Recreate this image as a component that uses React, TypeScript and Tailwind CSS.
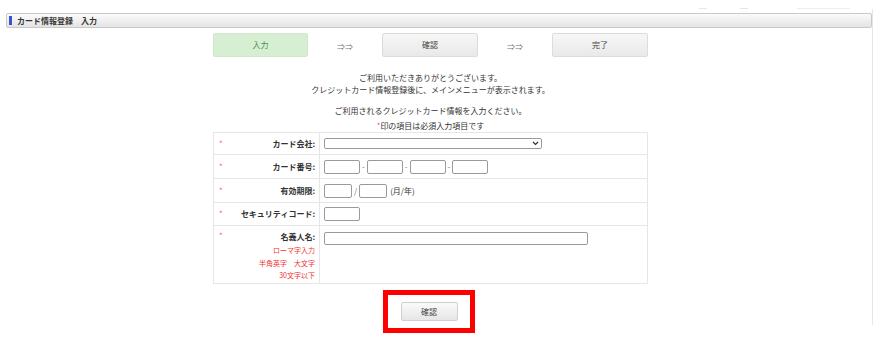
import React from 'react';

const font = { fontFamily: '"Noto Sans CJK JP", "Noto Sans", sans-serif' };

const Req = () => <span className="text-[#f06060] text-[8px] leading-none">*</span>;

const Box = ({ w }: { w: string }) => (
  <div className={`${w} h-[14px] rounded-[2px] border border-[#9a9a9a] bg-white`} />
);

const Step = ({ label, active }: { label: string; active?: boolean }) => (
  <div
    className={
      active
        ? 'w-[95px] h-[24px] rounded-[2px] border border-[#d2e8cc] bg-[#d6eed1] flex items-center justify-center text-[8px] text-[#4f8f4f]'
        : 'w-[96px] h-[24px] rounded-[2px] border border-[#dcdcdc] bg-gradient-to-b from-[#f7f7f7] to-[#e9e9e9] flex items-center justify-center text-[8px] text-[#444]'
    }
  >
    {label}
  </div>
);

const Arrow = () => (
  <div className="w-[74px] flex justify-center text-[8px] text-[#777] leading-none pt-[4px]">⇒⇒</div>
);

export default function App() {
  return (
    <div className="w-[885px] h-[346px] bg-white text-[#333] relative overflow-hidden" style={font}>
      {/* faint bits at very top */}
      <div className="absolute top-[8px] left-[699px] w-[8px] h-px bg-[#e6e6e6]" />
      <div className="absolute top-[8px] left-[740px] w-[8px] h-px bg-[#e6e6e6]" />
      <div className="absolute top-[8px] left-[797px] w-[53px] h-px bg-[#eeeeee]" />

      <div className="w-[873px] mt-[9px] pt-[4px] h-[316px] border-r border-[#e6e6e6]">
        {/* title bar */}
        <div className="ml-[6px] w-[866px] h-[15px] rounded-[2px] border border-[#c9c9c9] bg-gradient-to-b from-[#fbfbfb] to-[#e4e4e4] flex items-center">
          <div className="ml-[2px] w-[3px] h-[9px] bg-[#3b55c8]" />
          <span className="ml-[5px] text-[8px] font-bold text-[#333] leading-none">カード情報登録　入力</span>
        </div>

        <div className="w-[435px] ml-[213px]">
          {/* steps */}
          <div className="mt-[5px] flex items-center">
            <Step label="入力" active />
            <Arrow />
            <Step label="確認" />
            <Arrow />
            <Step label="完了" />
          </div>

          {/* messages */}
          <div className="mt-[15px] text-center text-[8px] leading-[12px] text-[#333]">
            <p>ご利用いただきありがとうございます。</p>
            <p>クレジットカード情報登録後に、メインメニューが表示されます。</p>
            <p className="mt-[9px]">ご利用されるクレジットカード情報を入力ください。</p>
            <p className="mt-[3px]">
              <span className="text-[#f06060]">*</span>印の項目は必須入力項目です
            </p>
          </div>

          {/* form table */}
          <div className="border border-[#e6e6e6] text-[8px]">
            <div className="flex h-[22px] border-b border-[#e6e6e6]">
              <div className="w-[106px] border-r border-[#e6e6e6] flex items-center justify-between pl-[5px] pr-[4px]">
                <Req />
                <span className="font-bold">カード会社:</span>
              </div>
              <div className="flex-1 flex items-center pl-[4px]">
                <div className="w-[218px] h-[11px] rounded-[2px] border border-[#9a9a9a] bg-white flex items-center justify-end pr-[2px]">
                  <svg width="7" height="5" viewBox="0 0 7 5">
                    <path d="M1 1 L3.5 3.5 L6 1" fill="none" stroke="#333" strokeWidth="1.2" />
                  </svg>
                </div>
              </div>
            </div>

            <div className="flex h-[24px] border-b border-[#e6e6e6]">
              <div className="w-[106px] border-r border-[#e6e6e6] flex items-center justify-between pl-[5px] pr-[4px]">
                <Req />
                <span className="font-bold">カード番号:</span>
              </div>
              <div className="flex-1 flex items-center pl-[4px] gap-[2px] text-[#777]">
                <Box w="w-[36px]" />
                <span>-</span>
                <Box w="w-[36px]" />
                <span>-</span>
                <Box w="w-[36px]" />
                <span>-</span>
                <Box w="w-[36px]" />
              </div>
            </div>

            <div className="flex h-[24px] border-b border-[#e6e6e6]">
              <div className="w-[106px] border-r border-[#e6e6e6] flex items-center justify-between pl-[5px] pr-[4px]">
                <Req />
                <span className="font-bold">有効期限:</span>
              </div>
              <div className="flex-1 flex items-center pl-[4px] gap-[2px]">
                <Box w="w-[28px]" />
                <span className="text-[#777]">/</span>
                <Box w="w-[28px]" />
                <span className="ml-[1px]">(月/年)</span>
              </div>
            </div>

            <div className="flex h-[23px] border-b border-[#e6e6e6]">
              <div className="w-[106px] border-r border-[#e6e6e6] flex items-center justify-between pl-[5px] pr-[4px]">
                <Req />
                <span className="font-bold">セキュリティコード:</span>
              </div>
              <div className="flex-1 flex items-center pl-[4px]">
                <Box w="w-[36px]" />
              </div>
            </div>

            <div className="flex h-[57px]">
              <div className="w-[106px] border-r border-[#e6e6e6] flex justify-between pl-[5px] pr-[4px] pt-[6px]">
                <Req />
                <div className="text-right">
                  <p className="font-bold leading-[10px]">名義人名:</p>
                  <div className="mt-[2px] text-[7px] leading-[12.5px] text-[#f03030]">
                    <p>ローマ字入力</p>
                    <p>半角英字　大文字</p>
                    <p>30文字以下</p>
                  </div>
                </div>
              </div>
              <div className="flex-1 pl-[4px] pt-[6px]">
                <div className="w-[264px] h-[13px] rounded-[2px] border border-[#9a9a9a] bg-white" />
              </div>
            </div>
          </div>

          {/* confirm button */}
          <div className="mt-[6px] ml-[170px] w-[92px] h-[43px] border-[5px] border-[#ff0000] flex items-center justify-center">
            <div className="w-[57px] h-[19px] rounded-[2px] border border-[#d0d0d0] bg-gradient-to-b from-[#fafafa] to-[#e6e6e6] flex items-center justify-center text-[8px] text-[#444]">
              確認
            </div>
          </div>
        </div>
      </div>
    </div>
  );
}
